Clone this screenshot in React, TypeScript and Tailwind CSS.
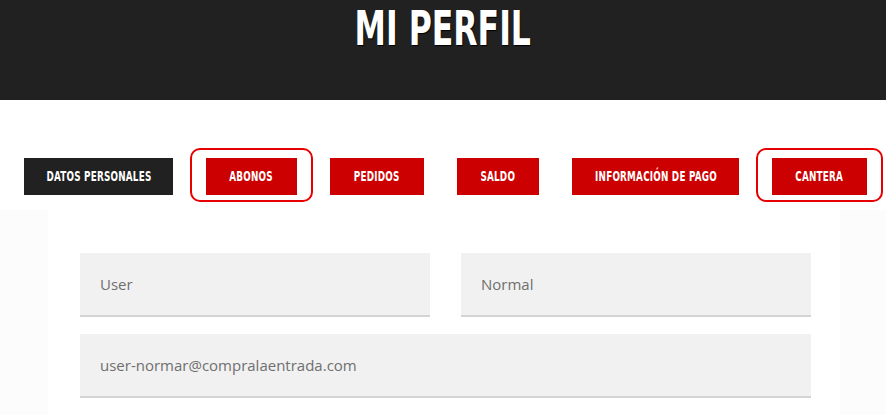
import React from 'react';

const tabs = [
  { label: 'DATOS PERSONALES', dark: true, outlined: false, w: 'w-[149px]' },
  { label: 'ABONOS', dark: false, outlined: true, w: 'w-[91px]' },
  { label: 'PEDIDOS', dark: false, outlined: false, w: 'w-[94px]' },
  { label: 'SALDO', dark: false, outlined: false, w: 'w-[82px]' },
  { label: 'INFORMACIÓN DE PAGO', dark: false, outlined: false, w: 'w-[167px]' },
  { label: 'CANTERA', dark: false, outlined: true, w: 'w-[95px]' },
];

// no condensed face installed: squeeze DejaVu Sans Bold horizontally
const squeezed = "inline-block whitespace-nowrap font-['DejaVu_Sans',sans-serif] font-bold [font-stretch:condensed]";

export default function App() {
  return (
    <div className="min-h-screen bg-white">
      <header className="h-[100px] bg-[#212121] flex justify-center">
        <h1 className="mt-[-1px] text-[48px] leading-[56px] text-white [text-shadow:1px_1px_1px_#000]">
          <span className={`${squeezed} scale-x-[0.73]`}>MI PERFIL</span>
        </h1>
      </header>

      <nav className="flex items-start gap-[1px] pl-[8px] mt-[48px]">
        {tabs.map((tab) => (
          <div
            key={tab.label}
            className={`border-2 rounded-[10px] px-[14px] pt-[8px] pb-[5px] ${
              tab.outlined ? 'border-[#e60000]' : 'border-transparent'
            }`}
          >
            <button
              className={`${tab.w} h-[37px] flex items-center justify-center text-[14px] text-white ${
                tab.dark ? 'bg-[#212121]' : 'bg-[#cc0000]'
              }`}
            >
              <span className={`${squeezed} scale-x-[0.7] tracking-[0.3px]`}>{tab.label}</span>
            </button>
          </div>
        ))}
      </nav>

      <section className="mt-[8px] bg-[#fcfcfc] flex">
        <div className="ml-[48px] w-[792px] bg-white pt-[43px] pl-[32px] pb-[40px]">
          <div className="grid grid-cols-2 gap-x-[31px] gap-y-[17px] w-[731px] font-['Open_Sans',sans-serif] text-[15px] text-[#6f6f6f]">
            <div className="h-[64px] bg-[#f1f1f1] border-b-2 border-[#d4d4d4] flex items-center px-[20px]">
              User
            </div>
            <div className="h-[64px] bg-[#f1f1f1] border-b-2 border-[#d4d4d4] flex items-center px-[20px]">
              Normal
            </div>
            <div className="col-span-2 h-[64px] bg-[#f1f1f1] border-b-2 border-[#d4d4d4] flex items-center px-[20px]">
              user-normar@compralaentrada.com
            </div>
          </div>
        </div>
      </section>
    </div>
  );
}
